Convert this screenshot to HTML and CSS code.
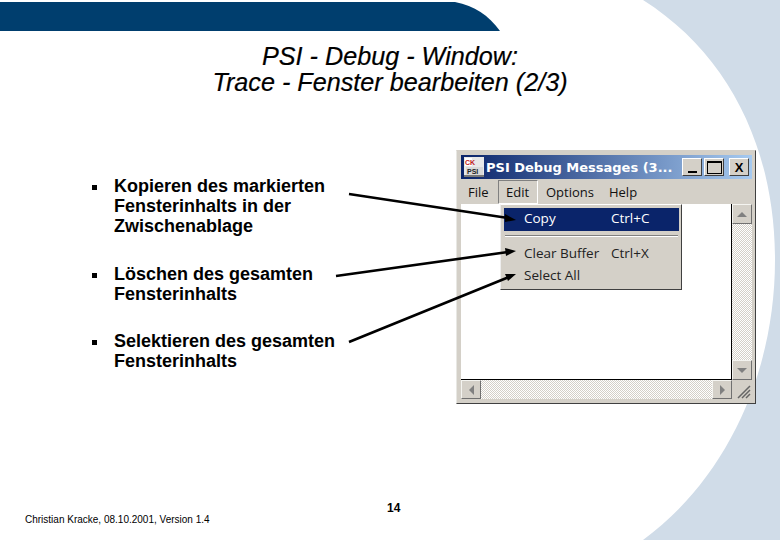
FILE: index.html
```html
<!DOCTYPE html>
<html lang="de">
<head>
<meta charset="utf-8">
<title>PSI - Debug - Window</title>
<link rel="stylesheet" href="styles.css">
</head>
<body>
<div class="slide">
  <svg class="backdrop" viewBox="0 0 780 540" aria-hidden="true">
    <path class="side" d="M643 0C730 55 775 150 775 260C775 375 725 480 643 540H780V0Z"/>
    <path class="bar" d="M0 2H455C475 6 488 15 500 31H0Z"/>
  </svg>
  <header class="title">
    <h1>PSI - Debug - Window:<br>Trace - Fenster bearbeiten (2/3)</h1>
  </header>
  <main class="main">
    <ul class="points">
      <li>Kopieren des markierten Fensterinhalts in der Zwischenablage</li>
      <li>Löschen des gesamten Fensterinhalts</li>
      <li>Selektieren des gesamten Fensterinhalts</li>
    </ul>
    <div class="window">
      <div class="titlebar">
        <svg class="appicon" viewBox="0 0 20 20" aria-hidden="true">
          <rect width="20" height="20" fill="#e8e8e8"/>
          <rect x="1" y="1" width="7" height="8" fill="#fff"/>
          <text x="1" y="8" class="ck">CK</text>
          <rect x="2" y="10" width="17" height="8" fill="#d8d8d8"/>
          <text x="3" y="16.5" class="psi">PSI</text>
          <rect y="18" width="20" height="2" fill="#777"/>
        </svg>
        <span class="caption">PSI Debug Messages (3...</span>
        <span class="winbtn"><i class="min"></i></span>
        <span class="winbtn"><i class="max"></i></span>
        <span class="winbtn close">X</span>
      </div>
      <div class="menubar">
        <span class="menuitem file">File</span>
        <span class="menuitem edit">Edit</span>
        <span class="menuitem options">Options</span>
        <span class="menuitem">Help</span>
      </div>
      <div class="body">
        <div class="client">
          <div class="popup">
            <div class="entry active"><span>Copy</span><span>Ctrl+C</span></div>
            <div class="sep"></div>
            <div class="entry"><span>Clear Buffer</span><span>Ctrl+X</span></div>
            <div class="entry"><span>Select All</span></div>
          </div>
        </div>
        <div class="vscroll">
          <span class="sbtn"><i class="up"></i></span>
          <span class="track"></span>
          <span class="sbtn"><i class="down"></i></span>
        </div>
      </div>
      <div class="bottom">
        <div class="hscroll">
          <span class="sbtn wide"><i class="left"></i></span>
          <span class="track"></span>
          <span class="sbtn wide"><i class="right"></i></span>
        </div>
        <svg class="grip" viewBox="0 0 20 19" aria-hidden="true">
          <path d="M6 18L18 6M10 18L18 10M14 18L18 14" stroke="#666" stroke-width="1.5"/>
        </svg>
      </div>
    </div>
  </main>
  <footer class="footer">
    <span class="author">Christian Kracke, 08.10.2001, Version 1.4</span>
    <span class="page">14</span>
  </footer>
  <svg class="arrows" viewBox="0 0 780 540" aria-hidden="true">
    <path d="M349 194L508 218M336 276L508 252M349 342L509 277" stroke="#000" stroke-width="2.6" fill="none"/>
    <path d="M516 220L505 214L505 222Z"/>
    <path d="M516 251L505 248L506 256Z"/>
    <path d="M516 274L505 274L508 281Z"/>
  </svg>
</div>
</body>
</html>
```
FILE: styles.css
```css
html, body {
  margin: 0;
  padding: 0;
  background: #fff;
}
.slide {
  position: relative;
  width: 780px;
  height: 540px;
  overflow: hidden;
  font-family: "Liberation Sans", Arial, sans-serif;
  color: #000;
}
.backdrop, .arrows {
  position: absolute;
  left: 0;
  top: 0;
  width: 780px;
  height: 540px;
}
.arrows { pointer-events: none; }
.side { fill: #d0dce8; }
.bar { fill: #003e6e; }
.title {
  position: relative;
  height: 150px;
  padding-top: 43px;
  box-sizing: border-box;
  text-align: center;
}
.title h1 {
  margin: 0;
  font-size: 25.2px;
  line-height: 26px;
  font-weight: 400;
  font-style: italic;
  -webkit-text-stroke: 0.2px #000;
}
.main {
  position: relative;
  display: flex;
  height: 254px;
}
.points {
  list-style: none;
  margin: 0;
  padding: 26px 0 0 114px;
  width: 456px;
  flex: none;
  box-sizing: border-box;
  font-size: 18px;
  line-height: 20px;
  font-weight: 700;
}
.points li {
  position: relative;
  width: 228px;
  margin-bottom: 28px;
}
.points li:nth-child(2) { margin-bottom: 27px; }
.points li::before {
  content: "";
  position: absolute;
  left: -22px;
  top: 9px;
  width: 5px;
  height: 5px;
  background: #000;
}
.window {
  width: 300px;
  height: 254px;
  flex: none;
  box-sizing: border-box;
  padding: 4px 3px 4px 4px;
  display: flex;
  flex-direction: column;
  background: #d4d0c8;
  border: 1px solid;
  border-color: #d4d0c8 #404040 #404040 #e8e8e4;
}
.titlebar {
  height: 24px;
  flex: none;
  display: flex;
  align-items: center;
  gap: 2px;
  padding: 0 3px 0 3px;
  background: linear-gradient(90deg, #0a246a, #a6caf0);
}
.appicon { width: 20px; height: 20px; flex: none; }
.ck { font: 700 7px "Liberation Sans", sans-serif; fill: #c02020; }
.psi { font: 700 7px "Liberation Sans", sans-serif; fill: #222; }
.caption {
  flex: 1;
  font: 700 13px "DejaVu Sans", sans-serif;
  color: #fff;
  white-space: nowrap;
}
.winbtn {
  width: 20px;
  height: 18px;
  flex: none;
  display: flex;
  align-items: center;
  justify-content: center;
  box-sizing: border-box;
  background: #d4d0c8;
  border: 1px solid;
  border-color: #fff #404040 #404040 #fff;
  font: 700 13px "Liberation Sans", sans-serif;
}
.close { margin-left: 3px; }
.min { width: 9px; height: 2px; background: #000; margin-top: 9px; }
.max { width: 13px; height: 10px; border: 1px solid #000; border-top-width: 2px; }
.menubar {
  height: 25px;
  flex: none;
  display: flex;
  align-items: center;
  font: 400 13px "Open Sans", sans-serif;
  color: #111;
}
.menuitem { padding: 0 7px; line-height: 24px; height: 24px; box-sizing: border-box; }
.file { margin-left: 0; width: 37px; }
.edit {
  border: 1px solid;
  border-color: #808080 #fff #fff #808080;
  line-height: 22px;
  width: 40px;
}
.options { padding-left: 8px; padding-right: 8px; }
.body {
  flex: 1;
  display: flex;
  min-height: 0;
}
.client {
  position: relative;
  flex: 1;
  background: #fff;
  border-bottom: 1px solid #000;
  border-right: 1px solid #000;
}
.popup {
  position: absolute;
  left: 39px;
  top: 0;
  width: 182px;
  height: 86px;
  box-sizing: border-box;
  padding: 3px 2px 0 3px;
  background: #d4d0c8;
  border: 1px solid;
  border-color: #fff #404040 #404040 #eee;
  font: 400 13.5px "Open Sans", sans-serif;
  color: #222;
}
.entry {
  display: flex;
  height: 22px;
  line-height: 21px;
  padding-left: 20px;
}
.entry.active { height: 23px; }
.entry span:first-child { width: 87px; }
.active {
  background: #0a246a;
  color: #fff;
}
.sep {
  height: 0;
  margin: 4px 1px 6px;
  border-top: 1px solid #808080;
  border-bottom: 1px solid #fff;
}
.vscroll {
  width: 20px;
  flex: none;
  display: flex;
  flex-direction: column;
}
.track {
  flex: 1;
  background: repeating-conic-gradient(#d4d0c8 0 25%, #fff 0 50%) 0 0 / 2px 2px;
}
.sbtn {
  flex: none;
  height: 20px;
  box-sizing: border-box;
  display: flex;
  align-items: center;
  justify-content: center;
  background: #d4d0c8;
  border: 1px solid;
  border-color: #f4f4f0 #707070 #707070 #f4f4f0;
}
.sbtn.wide { width: 20px; height: 19px; }
.sbtn i { width: 0; height: 0; border: 5px solid transparent; }
.up { border-top: 0 !important; border-bottom-color: #808080 !important; }
.down { border-bottom: 0 !important; border-top-color: #808080 !important; }
.left { border-left: 0 !important; border-right-color: #808080 !important; }
.right { border-right: 0 !important; border-left-color: #808080 !important; }
.bottom {
  height: 19px;
  flex: none;
  display: flex;
}
.hscroll {
  flex: 1;
  display: flex;
}
.grip { width: 20px; height: 19px; flex: none; }
.footer {
  position: relative;
  height: 136px;
}
.author {
  position: absolute;
  left: 25px;
  top: 109px;
  font-size: 10px;
  line-height: 14px;
  white-space: nowrap;
}
.page {
  position: absolute;
  left: 387px;
  top: 97px;
  font-size: 12px;
  line-height: 14px;
  font-weight: 700;
}
```
